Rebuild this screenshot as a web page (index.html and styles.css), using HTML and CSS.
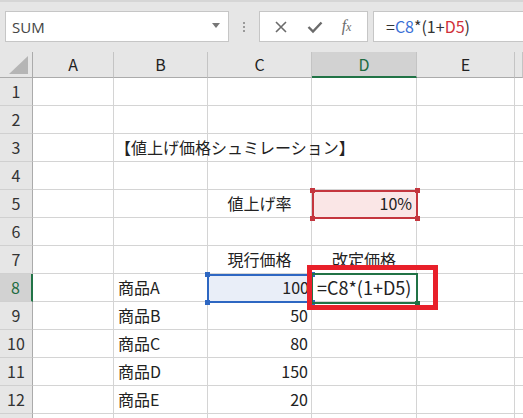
FILE: index.html
```html
<!DOCTYPE html>
<html lang="ja">
<head>
<meta charset="utf-8">
<link rel="stylesheet" href="styles.css">
</head>
<body>
<div class="toolbar">
  <div class="namebox"><span class="name">SUM</span><span class="arrow"></span></div>
  <div class="grip"><i></i><i></i><i></i></div>
  <div class="btns">
    <svg class="ico" width="14" height="14" viewBox="0 0 14 14"><path d="M2 2 L12 12 M12 2 L2 12" stroke="#6b6b6b" stroke-width="1.6" fill="none"/></svg>
    <svg class="ico" width="16" height="14" viewBox="0 0 16 14"><path d="M1.5 7 L6 11.5 L14.5 2.5" stroke="#6b6b6b" stroke-width="2.4" fill="none"/></svg>
    <span class="fx">f<small>x</small></span>
  </div>
  <div class="formula">=<span class="ref-b">C8</span>*(1+<span class="ref-r">D5</span>)</div>
</div>
<div class="sheet">
  <div class="corner"><svg width="20" height="18" viewBox="0 0 20 18"><path d="M19 0 L19 18 L0 18 Z" fill="#b5b5b5"/></svg></div>
  <div class="ch">A</div><div class="ch">B</div><div class="ch">C</div><div class="ch sel">D</div><div class="ch">E</div><div class="ch"></div>

  <div class="rh">1</div><div class="c"></div><div class="c"></div><div class="c"></div><div class="c"></div><div class="c"></div><div class="c"></div>
  <div class="rh">2</div><div class="c"></div><div class="c"></div><div class="c"></div><div class="c"></div><div class="c"></div><div class="c"></div>
  <div class="rh">3</div><div class="c"></div><div class="c over">【値上げ価格シュミレーション】</div><div class="c"></div><div class="c"></div><div class="c"></div><div class="c"></div>
  <div class="rh">4</div><div class="c"></div><div class="c"></div><div class="c"></div><div class="c"></div><div class="c"></div><div class="c"></div>
  <div class="rh">5</div><div class="c"></div><div class="c"></div><div class="c ctr">値上げ率</div><div class="c num pink">10%</div><div class="c"></div><div class="c"></div>
  <div class="rh">6</div><div class="c"></div><div class="c"></div><div class="c"></div><div class="c"></div><div class="c"></div><div class="c"></div>
  <div class="rh">7</div><div class="c"></div><div class="c"></div><div class="c ctr">現行価格</div><div class="c ctr">改定価格</div><div class="c"></div><div class="c"></div>
  <div class="rh sel">8</div><div class="c"></div><div class="c">商品A</div><div class="c num blue">100</div><div class="c edit">=C8*(1+D5)</div><div class="c"></div><div class="c"></div>
  <div class="rh">9</div><div class="c"></div><div class="c">商品B</div><div class="c num">50</div><div class="c"></div><div class="c"></div><div class="c"></div>
  <div class="rh">10</div><div class="c"></div><div class="c">商品C</div><div class="c num">80</div><div class="c"></div><div class="c"></div><div class="c"></div>
  <div class="rh">11</div><div class="c"></div><div class="c">商品D</div><div class="c num">150</div><div class="c"></div><div class="c"></div><div class="c"></div>
  <div class="rh">12</div><div class="c"></div><div class="c">商品E</div><div class="c num">20</div><div class="c"></div><div class="c"></div><div class="c"></div>
  <div class="rh"></div><div class="c"></div><div class="c"></div><div class="c"></div><div class="c"></div><div class="c"></div><div class="c"></div>

  <div class="hl hl-red"><b class="h tl"></b><b class="h tr"></b><b class="h bl"></b><b class="h br"></b></div>
  <div class="hl hl-blue"><b class="h tl"></b><b class="h tr"></b><b class="h bl"></b><b class="h br"></b></div>
  <div class="hl hl-green"><b class="h br"></b></div>
  <div class="annot"></div>
</div>
</body>
</html>
```
FILE: styles.css
```css
* { box-sizing: border-box; }
html, body { margin: 0; padding: 0; }
body {
  width: 523px;
  height: 418px;
  overflow: hidden;
  background: #ffffff;
  font-family: "Noto Sans CJK JP", "Noto Sans", sans-serif;
  color: #222;
}
.toolbar {
  height: 52px;
  background: #e6e6e6;
  border-top: 2px solid #d6d6d6;
  display: flex;
  align-items: flex-start;
  padding: 9px 0 0 5px;
}
.namebox {
  width: 224px;
  height: 31px;
  background: #fff;
  border: 1px solid #c6c6c6;
  display: flex;
  align-items: center;
  justify-content: space-between;
  padding: 0 8px 0 6px;
}
.name {
  font-family: "Open Sans", "Noto Sans", sans-serif;
  font-size: 15px;
  color: #444;
}
.arrow {
  width: 0; height: 0;
  border-left: 4px solid transparent;
  border-right: 4px solid transparent;
  border-top: 5px solid #777;
  margin-top: -3px;
}
.grip {
  width: 30px;
  height: 31px;
  display: flex;
  flex-direction: column;
  align-items: center;
  justify-content: center;
  gap: 2px;
}
.grip i { width: 2px; height: 2px; background: #9a9a9a; display: block; }
.btns {
  width: 109px;
  height: 31px;
  background: #fff;
  border: 1px solid #c6c6c6;
  display: flex;
  align-items: center;
  justify-content: space-around;
  padding: 0 6px 0 4px;
}
.fx {
  font-family: "Liberation Serif", serif;
  font-style: italic;
  font-size: 16px;
  color: #6b6b6b;
  margin-top: -2px;
}
.fx small { font-size: 12px; }
.formula {
  flex: 1;
  height: 31px;
  margin-left: 5px;
  background: #fff;
  border: 1px solid #c6c6c6;
  border-right: none;
  padding: 2px 0 0 12px;
  font-family: "Noto Sans CJK JP", sans-serif;
  font-size: 16px;
  line-height: 24px;
  color: #333;
}
.ref-b { color: #3a6fd6; }
.ref-r { color: #d0303a; }

.sheet {
  position: relative;
  display: grid;
  grid-template-columns: 33px 81px 94px 104px 105px 98px 8px;
  grid-template-rows: 26px;
  grid-auto-rows: 28px;
  font-size: 16px;
}
.corner {
  background: #e6e6e6;
  border-right: 1px solid #ababab;
  border-bottom: 1px solid #ababab;
  display: flex;
  align-items: flex-end;
  justify-content: flex-end;
  padding: 0 3px 3px 0;
}
.corner svg { display: block; }
.ch {
  background: #e6e6e6;
  border-right: 1px solid #c4c4c4;
  border-bottom: 1px solid #ababab;
  text-align: center;
  line-height: 25px;
  color: #222;
}
.ch.sel {
  background: #d2d2d2;
  border-bottom: 2px solid #217346;
  color: #1e6b41;
}
.rh {
  background: #e6e6e6;
  border-right: 1px solid #ababab;
  border-bottom: 1px solid #d0d0d0;
  text-align: center;
  line-height: 27px;
  color: #333;
}
.rh.sel {
  background: #d2d2d2;
  border-right: 2px solid #217346;
  color: #1e6b41;
}
.c {
  border-right: 1px solid #d4d4d4;
  border-bottom: 1px solid #d4d4d4;
  line-height: 27px;
  padding: 0 4px;
  white-space: nowrap;
  color: #222;
}
.c.over { overflow: visible; position: relative; z-index: 1; padding-left: 1px; }
.c.ctr { text-align: center; }
.c.num { text-align: right; padding-right: 3px; }
.c.pink { background: #fae6e6; padding-right: 4px; }
.c.blue { background: #e9eef8; padding-right: 2px; }
.c.edit { padding-left: 5px; font-size: 18px; }

.hl { position: absolute; pointer-events: none; }
.h { position: absolute; width: 5px; height: 5px; display: block; }
.hl-red { left: 312px; top: 138px; width: 106px; height: 29px; border: 2px solid #c4363e; }
.hl-red .h { background: #c4363e; }
.hl-blue { left: 207px; top: 222px; width: 106px; height: 29px; border: 2px solid #2e67c2; }
.hl-blue .h { background: #2e67c2; }
.hl-green { left: 311px; top: 221px; width: 107px; height: 31px; border: 2px solid #217346; }
.hl-green .h { background: #217346; }
.tl { left: -4px; top: -4px; }
.tr { right: -4px; top: -4px; }
.bl { left: -4px; bottom: -4px; }
.br { right: -4px; bottom: -4px; }
.annot {
  position: absolute;
  left: 307px;
  top: 213px;
  width: 131px;
  height: 45px;
  border: 5px solid #e8202a;
}
```
